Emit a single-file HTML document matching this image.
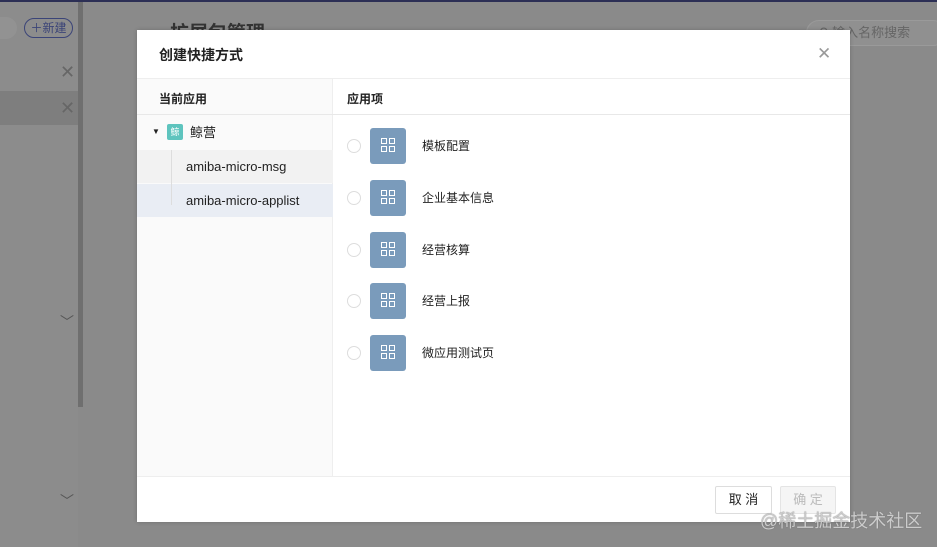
<!DOCTYPE html>
<html><head><meta charset="utf-8"><style>
*{margin:0;padding:0;box-sizing:border-box}
body{width:937px;height:547px;overflow:hidden;position:relative;background:#8a8a8a;font-family:"Liberation Sans","Noto Sans CJK SC",sans-serif;color:#222}
.a{position:absolute}
.r{position:absolute;left:347px;width:14px;height:14px;border:1px solid #ddd;border-radius:50%;background:#fff}
.ic{position:absolute;left:370px;width:36px;height:36px;background:#7a9bbb;border-radius:3px}
.ic i{position:absolute;width:6px;height:6px;border:1.3px solid #fff}
.t{position:absolute;left:422px;font-size:12px;color:#222}
</style></head><body>
<div class="a" style="left:0;top:0;width:937px;height:2px;background:#2c2f55"></div>
<div class="a" style="left:0;top:2px;width:78px;height:545px;background:#8c8c8c"></div>
<div class="a" style="left:0;top:91px;width:78px;height:34px;background:#7e7e7e"></div>
<div class="a" style="left:78px;top:2px;width:5px;height:405px;background:#6f6f6f"></div>
<div class="a" style="left:-10px;top:17px;width:27px;height:22px;border-radius:11px;background:#929292"></div>
<div class="a" style="left:24px;top:18px;width:49px;height:20px;border:1px solid #3b4478;border-radius:10px;color:#3b4478;font-size:12px;line-height:18px;text-align:center">＋新建</div>
<div class="a" style="left:60px;top:62px;color:#666;font-size:18px">✕</div>
<div class="a" style="left:60px;top:98px;color:#666;font-size:18px">✕</div>
<div class="a" style="left:60px;top:312px;color:#555;font-size:14px">﹀</div>
<div class="a" style="left:60px;top:491px;color:#555;font-size:14px">﹀</div>
<div class="a" style="left:170px;top:18px;color:#333;font-size:19px;font-weight:bold">扩展包管理</div>
<div class="a" style="left:806px;top:20px;width:140px;height:26px;border:1px solid #9a9a9a;border-radius:13px;background:#909090;color:#666;font-size:13px;line-height:24px;padding-left:12px">⚲ 输入名称搜索</div>
<div class="a" style="left:137px;top:30px;width:713px;height:492px;background:#fff;box-shadow:0 0 4px rgba(0,0,0,.2)">
 <div class="a" style="left:22px;top:15px;font-size:14px;font-weight:bold;color:#222">创建快捷方式</div>
 <div class="a" style="left:680px;top:14px;font-size:17px;color:#999">✕</div>
 <div class="a" style="left:0;top:48px;width:713px;height:1px;background:#eee"></div>
 <div class="a" style="left:0;top:49px;width:196px;height:397px;background:#fafafa;border-right:1px solid #eee"></div>
 <div class="a" style="left:0;top:84px;width:713px;height:1px;background:#e8e8e8"></div>
 <div class="a" style="left:22px;top:60px;font-size:12px;font-weight:bold">当前应用</div>
 <div class="a" style="left:210px;top:60px;font-size:12px;font-weight:bold">应用项</div>
 <div class="a" style="left:15px;top:97px;font-size:8px">▼</div>
 <div class="a" style="left:30px;top:94px;width:16px;height:16px;background:#5ec4be;border-radius:2px;color:#fff;font-size:9px;line-height:16px;text-align:center">鲸</div>
 <div class="a" style="left:53px;top:92px;font-size:13px">鲸营</div>
 <div class="a" style="left:0;top:120px;width:196px;height:33px;background:#f2f2f2"></div>
 <div class="a" style="left:0;top:154px;width:196px;height:33px;background:#e9edf4"></div>
 <div class="a" style="left:34px;top:120px;width:1px;height:55px;background:#ddd"></div>
 <div class="a" style="left:49px;top:129px;font-size:13px">amiba-micro-msg</div>
 <div class="a" style="left:49px;top:163px;font-size:13px">amiba-micro-applist</div>
 <div class="a" style="left:0;top:446px;width:713px;height:1px;background:#eee"></div>
 <div class="a" style="left:578px;top:456px;width:57px;height:28px;border:1px solid #ddd;border-radius:2px;font-size:13px;line-height:26px;text-align:center">取 消</div>
 <div class="a" style="left:643px;top:456px;width:56px;height:28px;border:1px solid #e4e4e4;background:#f5f5f5;border-radius:2px;font-size:13px;color:#bbb;line-height:26px;text-align:center">确 定</div>
</div>
<div class="r" style="top:139px"></div><div class="ic" style="top:128px"><i style="left:11px;top:10px"></i><i style="left:19px;top:10px"></i><i style="left:11px;top:18px"></i><i style="left:19px;top:18px"></i></div><div class="t" style="top:137px">模板配置</div>
<div class="r" style="top:191px"></div><div class="ic" style="top:180px"><i style="left:11px;top:10px"></i><i style="left:19px;top:10px"></i><i style="left:11px;top:18px"></i><i style="left:19px;top:18px"></i></div><div class="t" style="top:189px">企业基本信息</div>
<div class="r" style="top:243px"></div><div class="ic" style="top:232px"><i style="left:11px;top:10px"></i><i style="left:19px;top:10px"></i><i style="left:11px;top:18px"></i><i style="left:19px;top:18px"></i></div><div class="t" style="top:241px">经营核算</div>
<div class="r" style="top:294px"></div><div class="ic" style="top:283px"><i style="left:11px;top:10px"></i><i style="left:19px;top:10px"></i><i style="left:11px;top:18px"></i><i style="left:19px;top:18px"></i></div><div class="t" style="top:292px">经营上报</div>
<div class="r" style="top:346px"></div><div class="ic" style="top:335px"><i style="left:11px;top:10px"></i><i style="left:19px;top:10px"></i><i style="left:11px;top:18px"></i><i style="left:19px;top:18px"></i></div><div class="t" style="top:344px">微应用测试页</div>
<div class="a" style="left:760px;top:507px;font-size:18px;color:#ccc;text-shadow:0 0 1px #666">@稀土掘金技术社区</div>
</body></html>
